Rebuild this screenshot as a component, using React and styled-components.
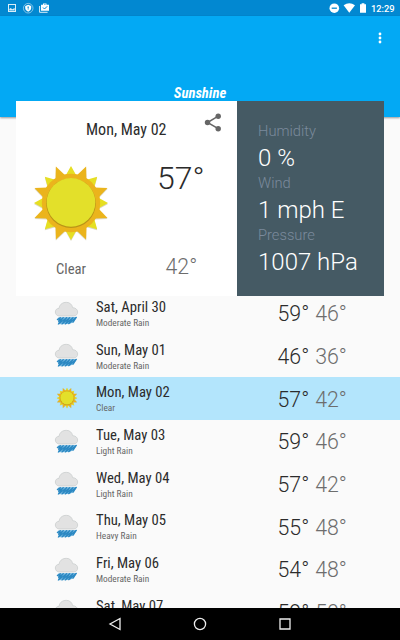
import React from "react";
import styled, { createGlobalStyle, css } from "styled-components";

const GlobalStyle = createGlobalStyle`
  body { margin: 0; background: #fafafa; }
  * { box-sizing: border-box; }
`;

const condensed = css`
  font-family: "Roboto Condensed", Roboto, sans-serif;
  font-stretch: 75%;
`;

const Screen = styled.div`
  display: flex;
  flex-direction: column;
  width: 400px;
  height: 640px;
  overflow: hidden;
  background: #fafafa;
  color: #2b2b2b;
  font-family: Roboto, sans-serif;
  white-space: nowrap;
`;

const StatusBar = styled.div`
  display: flex;
  flex: none;
  justify-content: space-between;
  height: 16px;
  background: #0288d1;
  color: #fff;
`;

const StatusIcons = styled.svg`
  display: block;
  width: ${(p) => p.$width}px;
  height: 16px;
`;

const StatusRight = styled.div`
  display: flex;
  padding-right: 5.5px;
`;

const Clock = styled.span`
  width: 23.5px;
  margin-left: 4px;
  font-size: 9.33px;
  font-weight: 500;
  line-height: 17.5px;
`;

const AppBar = styled.header`
  display: flex;
  flex: none;
  flex-direction: column;
  align-items: center;
  justify-content: space-between;
  height: 101px;
  padding: 14.5px 0 15px;
  background: #03a9f4;
  box-shadow: 0 1px 2px rgba(0, 0, 0, 0.4);
`;

const OverflowIcon = styled.svg`
  display: block;
  align-self: flex-end;
  width: 8px;
  height: 14px;
  margin-right: 16px;
`;

const Title = styled.h1`
  ${condensed}
  margin: 0;
  color: #fff;
  font-size: 14.7px;
  font-style: italic;
  font-weight: 700;
  line-height: 18px;
`;

const Card = styled.section`
  position: relative;
  display: grid;
  flex: none;
  grid-template-columns: 220.5px 1fr;
  height: 194.5px;
  margin: -15.7px 16px 0;
`;

const Today = styled.div`
  display: grid;
  grid-template-rows: 56px 95px 1fr;
  background: #fff;
`;

const TodayHead = styled.div`
  display: grid;
  grid-template-columns: 1fr auto 1fr;
  padding-top: 11px;
`;

const TodayDate = styled.span`
  ${condensed}
  grid-column: 2;
  font-size: 16px;
  line-height: 35px;
`;

const ShareIcon = styled.svg`
  display: block;
  justify-self: end;
  width: 20px;
  height: 20px;
  margin-right: 15px;
`;

const TodayMain = styled.div`
  display: flex;
  align-items: flex-start;
  justify-content: space-between;
  padding: 4px 32px 0 15px;
`;

const TodayFoot = styled.div`
  display: flex;
  justify-content: space-between;
  padding: 0 39.3px 0 40px;
  color: #666;
`;

const Condition = styled.span`
  ${condensed}
  font-size: 14.7px;
  line-height: 34px;
`;

const Temp = styled.span`
  color: ${(p) => (p.$low ? "#6d6d6d" : "#2b2b2b")};
  font-size: ${(p) => p.$size}px;
  font-weight: 300;
  line-height: ${(p) => p.$line}px;
`;

const Details = styled.dl`
  margin: 0;
  padding: 19px 0 0 21.5px;
  background: #455a64;
  font-weight: 300;
`;

const DetailLabel = styled.dt`
  height: 22px;
  color: #7b8a9c;
  font-size: 14.7px;
  line-height: 22px;
`;

const DetailValue = styled.dd`
  height: 30px;
  margin: 0;
  color: #fff;
  font-size: 24px;
  line-height: 32px;
`;

const Forecast = styled.ul`
  flex: 1;
  min-height: 0;
  margin: -4px 0 0;
  padding: 0;
  overflow: hidden;
  list-style: none;
`;

const Day = styled.li`
  display: grid;
  grid-template-columns: 42px 181.5px 37.7px 1fr;
  align-items: center;
  height: 42.66px;
  padding-left: 54px;
  background: ${(p) => (p.$selected ? "#b3e5fc" : "transparent")};
`;

const DayText = styled.div`
  ${condensed}
  padding-top: 2px;
`;

const DayName = styled.div`
  font-size: 14.7px;
  line-height: 17px;
`;

const DayCondition = styled.div`
  color: #666;
  font-size: 9.33px;
  line-height: 13px;
`;

const DayTemp = styled(Temp)`
  padding-top: 2.5px;
`;

const Weather = styled.svg`
  display: block;
  flex: none;
  overflow: visible;
  width: ${(p) => p.$size}px;
  height: ${(p) => p.$size}px;
  margin: ${(p) => p.$margin || 0};
`;

const NavBar = styled.nav`
  display: flex;
  flex: none;
  align-items: center;
  justify-content: center;
  gap: 69px;
  height: 32px;
  background: #000;
`;

const NavIcon = styled.svg`
  display: block;
  width: 16px;
  height: 16px;
  fill: none;
  stroke: #eee;
  stroke-width: 1.3;
`;

const point = (deg, r) => {
  const a = (deg * Math.PI) / 180;
  return `${(r * Math.sin(a)).toFixed(2)},${(-r * Math.cos(a)).toFixed(2)}`;
};
const ray = (deg, tip) => [point(deg - 11, 28), point(deg, tip), point(deg + 11, 28)].join(" ");
const rays = [0, 45, 90, 135, 180, 225, 270, 315];

function Sun({ size, margin }) {
  return (
    <Weather $size={size} $margin={margin} viewBox="-40 -40 80 80">
      <g fill="#8a7a20" opacity="0.3" transform="translate(0 1)">
        {rays.map((d) => <polygon key={d} points={ray(d, 37)} />)}
        {rays.map((d) => <polygon key={-d - 1} points={ray(d + 22.5, 39.5)} />)}
      </g>
      <g fill="#e6df22">{rays.map((d) => <polygon key={d} points={ray(d, 37)} />)}</g>
      <g fill="#ebb41c">
        {rays.map((d) => <polygon key={d} points={ray(d + 22.5, 39.5)} />)}
        <circle r="29.2" />
      </g>
      <circle cy="0.2" r="24.8" fill="#a98a16" opacity="0.75" />
      <circle cy="-0.6" r="24.3" fill="#e3e02a" />
    </Weather>
  );
}

function Rain() {
  return (
    <Weather $size={25} viewBox="0 0 75 75">
      <path
        d="M17 45 C8 45 4 39 4 33 C4 26 9 22 15 22 C17 9 27 4 37 4 C47 4 54 10 56 20 C65 20 71 26 71 33 C71 40 66 45 59 45 Z"
        fill="#e2e2e2"
        stroke="#c4c8c8"
        strokeWidth="2"
      />
      <path d="M14 49 L68 48 L60 63 L46 69 L12 70 L14 60 L8 56 Z" fill="#7bbbe2" />
      <path
        d="M9 56 L19 50 L14 61 L28 50 L13 69 L38 50 L24 69 L47 50 L34 69 L57 50 L44 68 L67 49 L56 65"
        fill="none"
        stroke="#2b88c2"
        strokeWidth="3.6"
        strokeLinejoin="round"
      />
    </Weather>
  );
}

const details = [
  ["Humidity", "0 %"],
  ["Wind", "1 mph E"],
  ["Pressure", "1007 hPa"],
];

const days = [
  ["Sat, April 30", "Moderate Rain", 59, 46],
  ["Sun, May 01", "Moderate Rain", 46, 36],
  ["Mon, May 02", "Clear", 57, 42],
  ["Tue, May 03", "Light Rain", 59, 46],
  ["Wed, May 04", "Light Rain", 57, 42],
  ["Thu, May 05", "Heavy Rain", 55, 48],
  ["Fri, May 06", "Moderate Rain", 54, 48],
  ["Sat, May 07", "Light Rain", 59, 50],
];

export default function App() {
  return (
    <>
      <GlobalStyle />
      <Screen>
        <StatusBar>
          <StatusIcons $width={60} viewBox="0 0 60 16">
            <path fillRule="evenodd" d="M8 4h8v8H8zM9 5v6h6V5zM9.3 10.5V9l1.4-1 1.6 1.2L14.7 8v2.5z" fill="#d9edf8" />
            <circle cx="28.2" cy="8.2" r="4.8" fill="none" stroke="#9fd0ec" strokeWidth="0.8" />
            <path d="M28.2 4.8l3 1.1v2.2c0 1.8-1.4 3-3 3.7-1.6-.7-3-1.9-3-3.7V5.9z" fill="#fff" />
            <path d="M28.2 6.5v3.2M27.4 7.2h1.6" stroke="#0288d1" strokeWidth="0.7" />
            <path fillRule="evenodd" d="M41 4.7h2V3.4h3.5v1.3H49v6h-8zM44 4.2v.6h1.7v-.6z" fill="#fff" />
            <path d="M39.6 6v6.3h8" fill="none" stroke="#d9edf8" />
            <path d="M43 7.5l1.5 1.5 2.7-2.7" fill="none" stroke="#0288d1" />
          </StatusIcons>
          <StatusRight>
            <StatusIcons $width={39} viewBox="328 0 39 16">
              <circle cx="334.3" cy="8.2" r="4.8" fill="#fff" />
              <path d="M331.7 8.2h5.2" stroke="#0288d1" strokeWidth="1.3" />
              <path d="M343.6 5.3q5.7-4 11.4 0L349.3 12.8z" fill="#fff" />
              <path d="M360 4.2h1.6V3.2h2.8v1h1.6v8.6h-6z" fill="#fff" />
            </StatusIcons>
            <Clock>12:29</Clock>
          </StatusRight>
        </StatusBar>
        <AppBar>
          <OverflowIcon viewBox="0 0 8 14" fill="#fff">
            <circle cx="4" cy="3" r="1.4" />
            <circle cx="4" cy="7" r="1.4" />
            <circle cx="4" cy="11" r="1.4" />
          </OverflowIcon>
          <Title>Sunshine</Title>
        </AppBar>
        <Card>
          <Today>
            <TodayHead>
              <TodayDate>Mon, May 02</TodayDate>
              <ShareIcon viewBox="0 0 20 20" fill="#666" stroke="#666">
                <path d="M16.2 4.2L5.5 10.5l10.7 6.2" fill="none" strokeWidth="1.5" />
                <g stroke="none">
                  <circle cx="16.2" cy="4.2" r="2.7" />
                  <circle cx="5.5" cy="10.5" r="2.7" />
                  <circle cx="16.2" cy="16.7" r="2.7" />
                </g>
              </ShareIcon>
            </TodayHead>
            <TodayMain>
              <Sun size={80} margin="1.9px 0 0 0.2px" />
              <Temp $size={32} $line={34}>57°</Temp>
            </TodayMain>
            <TodayFoot>
              <Condition>Clear</Condition>
              <Temp $low $size={21.3} $line={29.5}>42°</Temp>
            </TodayFoot>
          </Today>
          <Details>
            {details.map(([label, value]) => (
              <React.Fragment key={label}>
                <DetailLabel>{label}</DetailLabel>
                <DetailValue>{value}</DetailValue>
              </React.Fragment>
            ))}
          </Details>
        </Card>
        <Forecast>
          {days.map(([name, condition, high, low]) => (
            <Day key={name} $selected={condition === "Clear"}>
              {condition === "Clear" ? <Sun size={22} margin="0 0 0 1.7px" /> : <Rain />}
              <DayText>
                <DayName>{name}</DayName>
                <DayCondition>{condition}</DayCondition>
              </DayText>
              <DayTemp $size={21.3} $line={40}>{high}°</DayTemp>
              <DayTemp $low $size={21.3} $line={40}>{low}°</DayTemp>
            </Day>
          ))}
        </Forecast>
        <NavBar>
          <NavIcon viewBox="0 0 16 16"><path d="M13 2.5v11L3 8z" /></NavIcon>
          <NavIcon viewBox="0 0 16 16"><circle cx="8" cy="8" r="5.6" /></NavIcon>
          <NavIcon viewBox="0 0 16 16"><path d="M3 3h10v10H3z" /></NavIcon>
        </NavBar>
      </Screen>
    </>
  );
}
